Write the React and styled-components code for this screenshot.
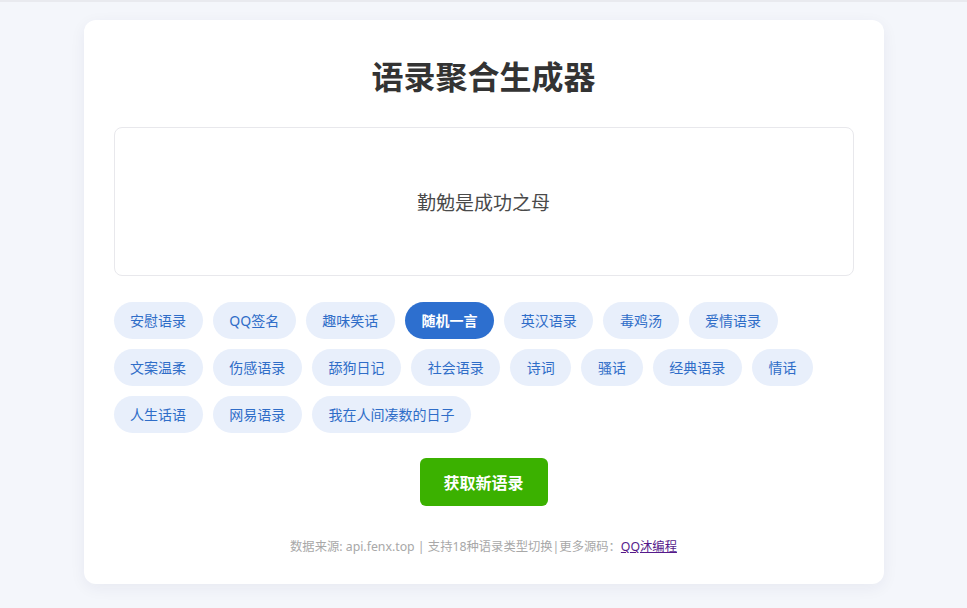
import React, { useState } from 'react';
import styled, { createGlobalStyle } from 'styled-components';

const GlobalStyle = createGlobalStyle`
  html, body {
    margin: 0;
    padding: 0;
    background: #f4f6fb;
    font-family: "Noto Sans", "Noto Sans CJK SC", sans-serif;
  }
  body {
    border-top: 2px solid #e9eaef;
  }
`;

const types = [
  '安慰语录', 'QQ签名', '趣味笑话', '随机一言', '英汉语录', '毒鸡汤', '爱情语录',
  '文案温柔', '伤感语录', '舔狗日记', '社会语录', '诗词', '骚话', '经典语录', '情话',
  '人生话语', '网易语录', '我在人间凑数的日子',
];

const Page = styled.div`
  padding: 18px 0 24px;
  display: flex;
  justify-content: center;
`;

const Card = styled.div`
  width: 800px;
  box-sizing: border-box;
  background: #fff;
  border-radius: 12px;
  padding: 30px 30px 28px;
  box-shadow: 0 4px 16px rgba(30, 40, 80, 0.06);
`;

const Title = styled.h1`
  margin: 8px 0 31px;
  font-size: 32px;
  line-height: 38px;
  font-weight: 700;
  text-align: center;
  color: #333;
`;

const QuoteBox = styled.div`
  height: 149px;
  box-sizing: border-box;
  border: 1px solid #e8e8ec;
  border-radius: 8px;
  display: flex;
  align-items: center;
  justify-content: center;
  font-size: 19px;
  color: #4a4a4a;
  margin-bottom: 26px;
`;

const TagList = styled.div`
  display: flex;
  flex-wrap: wrap;
  gap: 10px;
`;

const Tag = styled.button`
  border: none;
  font-family: inherit;
  font-size: 14px;
  line-height: 21px;
  padding: 8px 16.6px;
  border-radius: 19px;
  cursor: pointer;
  background: ${(p) => (p.$active ? '#2d6fcf' : '#e8effb')};
  color: ${(p) => (p.$active ? '#fff' : '#2f6dc8')};
  font-weight: ${(p) => (p.$active ? 700 : 400)};
`;

const Actions = styled.div`
  display: flex;
  justify-content: center;
  margin-top: 25px;
`;

const FetchButton = styled.button`
  border: none;
  background: #3bb100;
  color: #fff;
  font-family: inherit;
  font-size: 16px;
  font-weight: 700;
  width: 128px;
  height: 48px;
  border-radius: 6px;
  cursor: pointer;
`;

const Footer = styled.p`
  margin: 32px 0 0;
  text-align: center;
  font-size: 12.3px;
  line-height: 18px;
  color: #a8a8a8;

  a {
    color: #551a8b;
  }
`;

export default function App() {
  const [active, setActive] = useState('随机一言');

  return (
    <>
      <GlobalStyle />
      <Page>
        <Card>
          <Title>语录聚合生成器</Title>
          <QuoteBox>勤勉是成功之母</QuoteBox>
          <TagList>
            {types.map((t) => (
              <Tag key={t} $active={t === active} onClick={() => setActive(t)}>
                {t}
              </Tag>
            ))}
          </TagList>
          <Actions>
            <FetchButton>获取新语录</FetchButton>
          </Actions>
          <Footer>
            数据来源: api.fenx.top | 支持18种语录类型切换|更多源码：<a href="#">QQ沐编程</a>
          </Footer>
        </Card>
      </Page>
    </>
  );
}
